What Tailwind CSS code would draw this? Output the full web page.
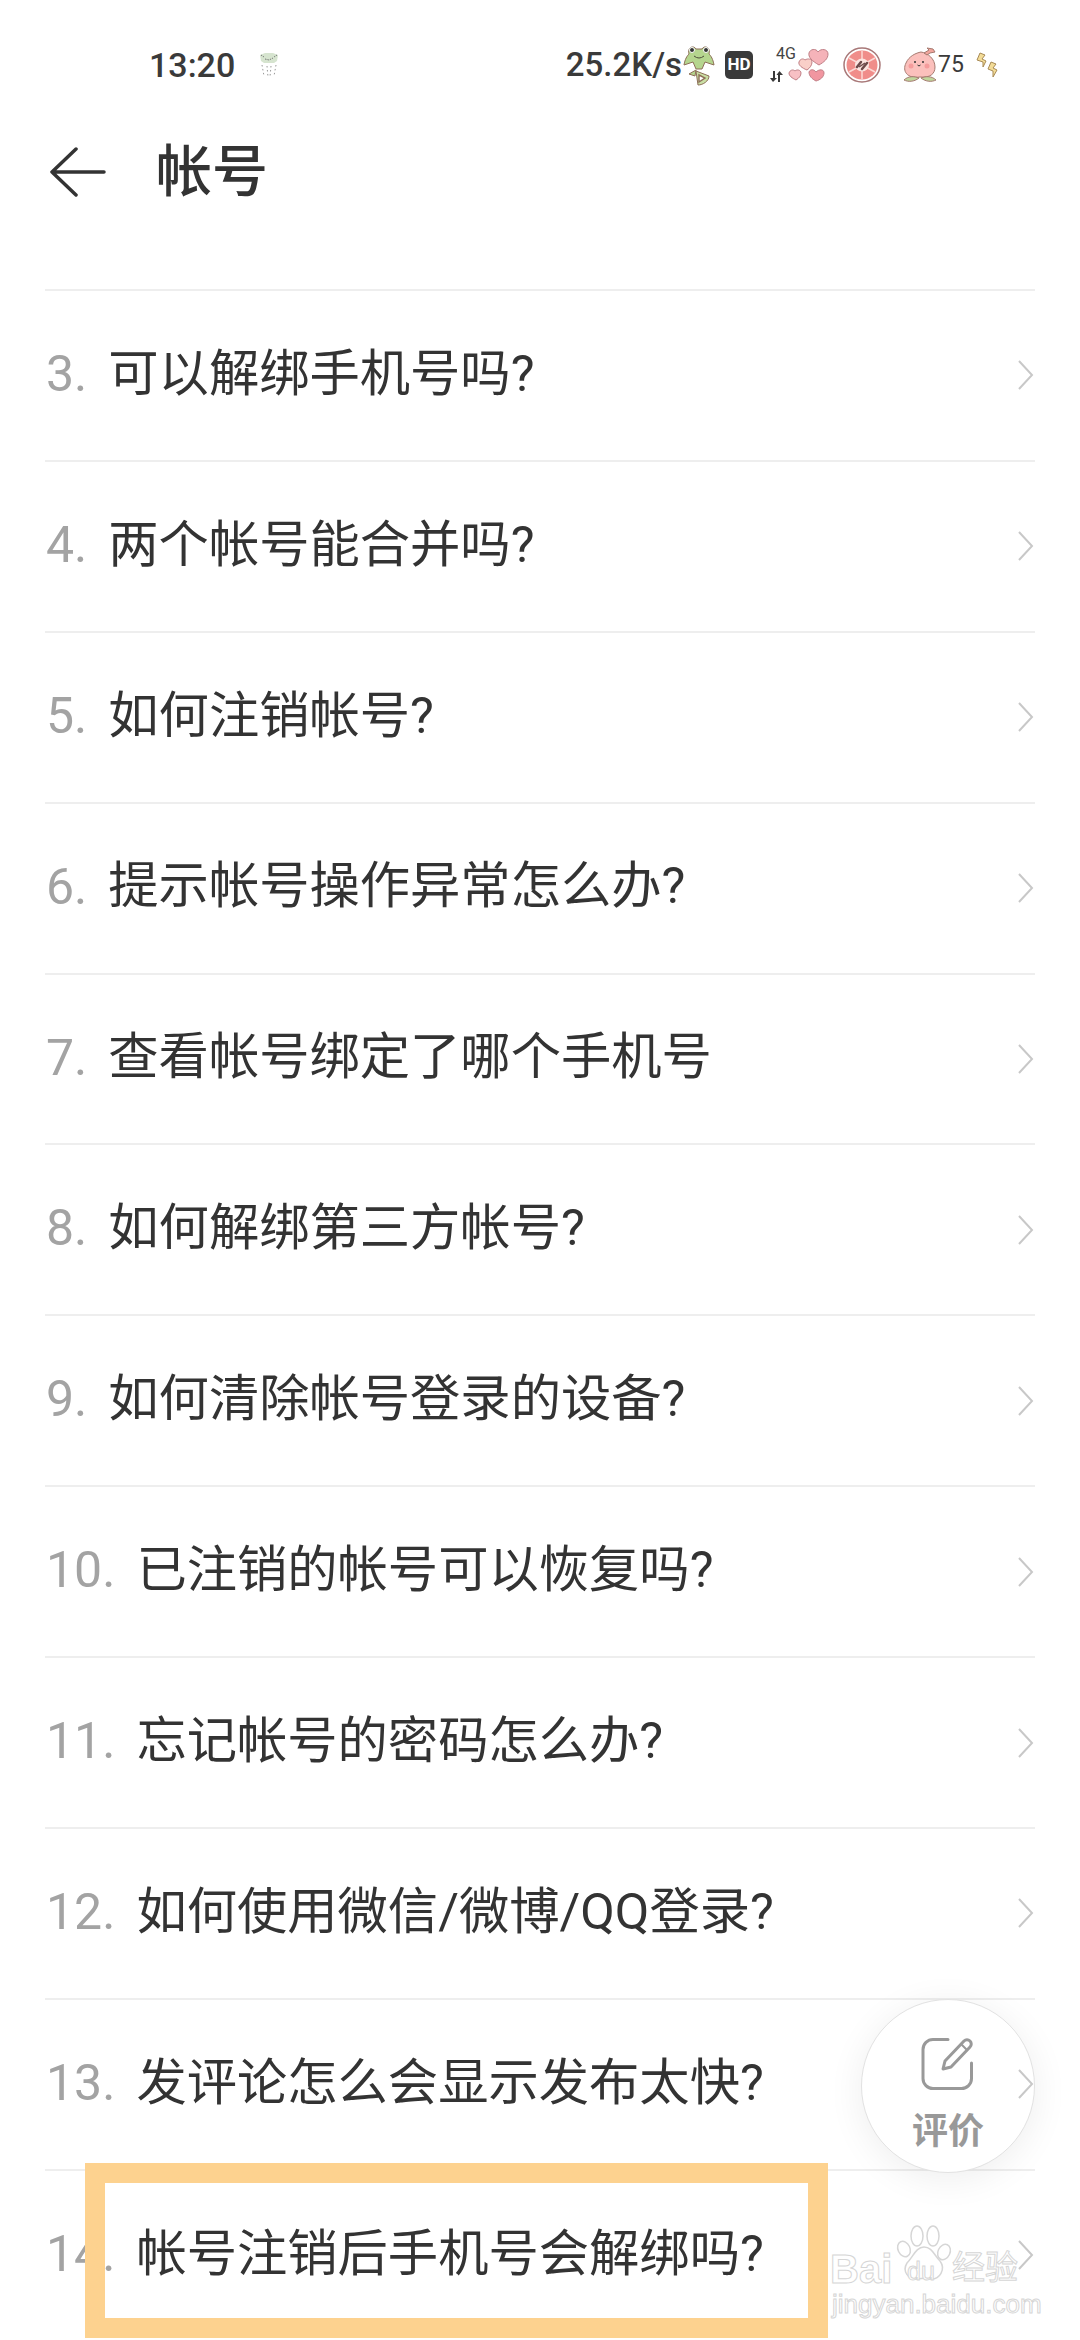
<!DOCTYPE html>
<html lang="zh-CN">
<head>
  <meta charset="UTF-8" />
  <meta name="viewport" content="width=device-width, initial-scale=1.0"/>
  <title>帐号</title>
  <script src="https://cdn.jsdelivr.net/npm/@tailwindcss/browser@4"></script>
</head>
<body class="bg-white text-[#333333] font-[Roboto,'Noto_Sans_CJK_SC',sans-serif]">
<div class="relative w-[1080px] h-[2340px] overflow-hidden bg-white">

  <!-- Status bar -->
  <div class="flex items-center h-[129px] pl-[149px] pr-[82px] text-[#3a3a3a]">
    <span class="text-[34px] font-medium leading-none w-[109px]">13:20</span>
    <svg class="w-[22px] h-[26px]" viewBox="0 0 22 26" fill="none">
      <path d="M2 3 L7 1 L15 1 L20 3 L19 9 L16 11 L6 11 L3 9 Z" fill="#d6e4cf"/>
      <path d="M3 3 L6 5 M19 3 L16 5 M7 7 L11 8 L15 6" stroke="#777" stroke-width="1" stroke-dasharray="1.5 1"/>
      <path d="M4 13 L6 24 M9 14 L10 25 M13 14 L12 25 M18 13 L16 24" stroke="#999" stroke-width="1" stroke-dasharray="1.5 2.5"/>
    </svg>
    <div class="ml-auto flex items-center">
      <span class="text-[33px] font-medium leading-none">25.2K/s</span>
      <!-- frog -->
      <svg class="ml-[1px] w-[32px] h-[42px]" viewBox="0 0 32 42" fill="none" stroke="#8d6f58" stroke-width="1">
        <path d="M1 21 C2 15 4 12 6 10 C4 3 11 1 13 5 L19 5 C21 1 28 3 26 10 C28 12 30 15 31 21 L22 18 L19 25 L13 25 L10 18 Z" fill="#b5d58e"/>
        <circle cx="9" cy="6" r="2.500" fill="#333" stroke="#fff"/>
        <circle cx="23" cy="6" r="2.500" fill="#333" stroke="#fff"/>
        <path d="M11 12 Q16 16 21 12" stroke="#4d4d3a"/>
        <path d="M6 30 L13 26 L12 32 Z" fill="#b5d58e"/>
        <path d="M13 27 L26 32 C26 37 20 41 15 41 Z" fill="#c9dfa4"/>
        <path d="M16 31 L22 34 L16 38 Z" fill="#fff" stroke-width="1.400"/>
      </svg>
      <!-- HD -->
      <div class="ml-[10px] w-[28px] h-[28px] rounded-[5px] bg-[#3a3a3a] text-white text-[17px] font-bold flex items-center justify-center leading-none">HD</div>
      <!-- 4G -->
      <div class="ml-[17px] w-[26px] h-[36px] flex flex-col justify-between items-end">
        <span class="text-[16px] leading-[13px] text-[#444444]">4G</span>
        <svg class="self-start w-[13px] h-[13px]" viewBox="0 0 13 13" fill="#3a3a3a">
          <path d="M3 1 H5 V8 H7 L3 12 L0 8 H3 Z"/>
          <path d="M10 12 H8 V5 H6.5 L9.500 1 L13 5 H10 Z"/>
        </svg>
      </div>
      <!-- hearts -->
      <svg class="ml-[-8px] w-[42px] h-[36px]" viewBox="0 0 42 36" stroke="#c07f86" stroke-width="1">
        <path d="M31 18 C24 14 20 10 21 6 C22 2 28 1 30 5 C33 1 40 2 40 7 C40 12 36 15 31 18 Z" fill="#f5b3b9"/>
        <path d="M19 23 C14 21 10 18 11 15 C12 12 15 11 17 13 C20 11 24 12 24 15 C24 18 22 21 19 23 Z" fill="#f9cfc8"/>
        <path d="M8 33 C4 31 1 29 1 26 C2 23 5 22 7 24 C9 22 13 23 13 26 C13 29 11 31 8 33 Z" fill="#f8c0c4"/>
        <path d="M28 34 C24 32 21 29 21 25 C22 22 26 22 28 25 C31 22 36 22 36 26 C36 30 32 33 28 34 Z" fill="#f196a0"/>
      </svg>
      <!-- grapefruit -->
      <svg class="ml-[13px] w-[38px] h-[36px]" viewBox="0 0 38 36" fill="none">
        <ellipse cx="19" cy="18" rx="18" ry="17" fill="#fff" stroke="#a87878" stroke-width="1.500"/>
        <ellipse cx="19" cy="18" rx="15.500" ry="14.500" fill="#f08d8a"/>
        <path d="M19 4 V32 M6 11 L32 25 M32 11 L6 25" stroke="#fbd8d4" stroke-width="1.500"/>
        <ellipse cx="19" cy="18" rx="7" ry="6.500" fill="#fbe4e0"/>
        <path d="M14 20 L18 15 M19 22 L24 16" stroke="#6d4a4a" stroke-width="2.500" stroke-linecap="round"/>
        <path d="M16 20 L22 16" stroke="#6d4a4a" stroke-width="1.500"/>
      </svg>
      <!-- peach -->
      <svg class="ml-[21px] w-[36px] h-[36px]" viewBox="0 0 36 36" fill="none" stroke="#a57a70" stroke-width="1">
        <path d="M18 30 C5 32 0 24 4 16 C7 9 14 6 19 5 C26 6 33 12 33 20 C33 27 28 31 18 30 Z" fill="#fbc0bc"/>
        <path d="M22 6 L27 3 L25 1 L31 2 L33 5 L28 6 L25 8 Z" fill="#f2a59c"/>
        <path d="M2 33 C6 29 12 29 17 31 C12 35 6 35 2 33 Z" fill="#c0d69c"/>
        <path d="M34 33 C30 29 24 29 19 31 C24 35 30 35 34 33 Z" fill="#c0d69c"/>
        <circle cx="9" cy="19" r="2.500" fill="#f59c9c" stroke="none"/>
        <circle cx="25" cy="19" r="2.500" fill="#f59c9c" stroke="none"/>
        <circle cx="13" cy="15" r="1" fill="#333" stroke="none"/>
        <circle cx="21" cy="15" r="1" fill="#333" stroke="none"/>
        <path d="M15.500 18 Q17 20 18.500 18" stroke="#333"/>
      </svg>
      <span class="text-[23px] leading-none text-[#3a3a3a] w-[22px]">75</span>
      <!-- charging bolts -->
      <svg class="ml-[16px] w-[22px] h-[26px]" viewBox="0 0 22 26" fill="#f3dc97" stroke="#a88a55" stroke-width="1">
        <path d="M4 1 L9 3 L6 7 L10 9 L7 15 L7 10 L1 8 Z"/>
        <path d="M15 10 L20 12 L17 16 L21 18 L17 25 L17 19 L12 17 Z"/>
      </svg>
    </div>
  </div>

  <!-- Title bar -->
  <div class="flex items-center h-[85px] pl-[50px]">
    <svg class="w-[56px] h-[50px]" viewBox="0 0 56 50" fill="none" stroke="#333333" stroke-width="3.500" stroke-linecap="round" stroke-linejoin="round">
      <path d="M26 2 L2 25 L26 48 M2 25 H54"/>
    </svg>
    <h1 class="ml-[50px] text-[56px] font-medium leading-none">帐号</h1>
  </div>

  <!-- Question list -->
  <ul id="list" class="mt-[75px] mx-[45px]"></ul>

  <!-- Rate button -->
  <div class="absolute left-[861px] top-[1999px] z-10 w-[174px] h-[174px] rounded-full bg-white border border-[#e2e2e2] shadow-[0_6px_36px_rgba(0,0,0,0.07)] flex flex-col items-center">
    <svg class="mt-[34px] w-[60px] h-[60px]" viewBox="0 0 60 60" fill="none" stroke="#999999" stroke-width="3" stroke-linecap="round" stroke-linejoin="round">
      <path d="M30 5.500 H15 A10 10 0 0 0 5 15.500 V44.500 A10 10 0 0 0 15 54.500 H43.500 A10 10 0 0 0 53.500 44.500 V29"/>
      <path d="M25 35 L27 27 L46 7 A4 4 0 0 1 52 13 L33 33 Z"/>
      <path d="M43 10 L49 16" stroke-width="2"/>
    </svg>
    <span class="mt-[20px] text-[36px] font-bold leading-none text-[#999999]">评价</span>
  </div>

  <!-- Baidu watermark -->
  <div class="absolute left-[830px] top-[2225px] z-10 w-[200px] h-[92px] text-white [-webkit-text-stroke:1px_#d6d6d6]">
    <span class="absolute left-0 top-[24px] text-[40px] font-bold leading-none font-['Liberation_Sans']">Bai</span>
    <svg class="absolute left-[66px] top-0 w-[56px] h-[60px]" viewBox="0 0 56 60" fill="none" stroke="#d6d6d6" stroke-width="1.500">
      <ellipse cx="8" cy="24" rx="6" ry="8" transform="rotate(-25 8 24)"/>
      <ellipse cx="21" cy="11" rx="6" ry="10"/>
      <ellipse cx="37" cy="11" rx="6" ry="10"/>
      <ellipse cx="48" cy="27" rx="6" ry="8" transform="rotate(25 48 27)"/>
      <path d="M28 22 C36 22 38 30 44 36 C50 44 44 55 34 54 C30 53 26 53 22 54 C12 55 6 46 11 38 C17 32 20 22 28 22 Z"/>
    </svg>
    <span class="absolute left-[77px] top-[34px] text-[25px] leading-none font-['Liberation_Sans']">du</span>
    <span class="absolute left-[122px] top-[26px] text-[33px] leading-none">经验</span>
    <span class="absolute left-[2px] top-[66px] text-[26px] leading-none font-['Liberation_Sans']">jingyan.baidu.com</span>
  </div>

  <!-- Highlight frame -->
  <div class="absolute left-[85px] top-[2163px] z-20 w-[743px] h-[175px] border-[20px] border-[#fdd28f]"></div>
</div>

<script>
  const questions = [
    ["3.", "可以解绑手机号吗?"],
    ["4.", "两个帐号能合并吗?"],
    ["5.", "如何注销帐号?"],
    ["6.", "提示帐号操作异常怎么办?"],
    ["7.", "查看帐号绑定了哪个手机号"],
    ["8.", "如何解绑第三方帐号?"],
    ["9.", "如何清除帐号登录的设备?"],
    ["10.", "已注销的帐号可以恢复吗?"],
    ["11.", "忘记帐号的密码怎么办?"],
    ["12.", "如何使用微信/微博/QQ登录?"],
    ["13.", "发评论怎么会显示发布太快?"],
    ["14.", "帐号注销后手机号会解绑吗?"],
  ];

  const list = document.getElementById("list");
  questions.forEach(([num, text]) => {
    list.innerHTML += `
      <li class="flex items-center h-[170.9px] border-t-2 border-[#eeeeee] pb-[3px]">
        <span class="ml-[1px] text-[50px] leading-none text-[#a3a3a3]">${num}</span>
        <span class="ml-[21px] text-[50.3px] leading-none text-[#333333]">${text}</span>
        <svg class="relative z-20 ml-auto mr-[1px] mt-[3px] w-[16px] h-[30px]" viewBox="0 0 16 30" fill="none" stroke="#c8c8c8" stroke-width="2">
          <path d="M1 1 L14 15 L1 29"/>
        </svg>
      </li>`;
  });
</script>
</body>
</html>
